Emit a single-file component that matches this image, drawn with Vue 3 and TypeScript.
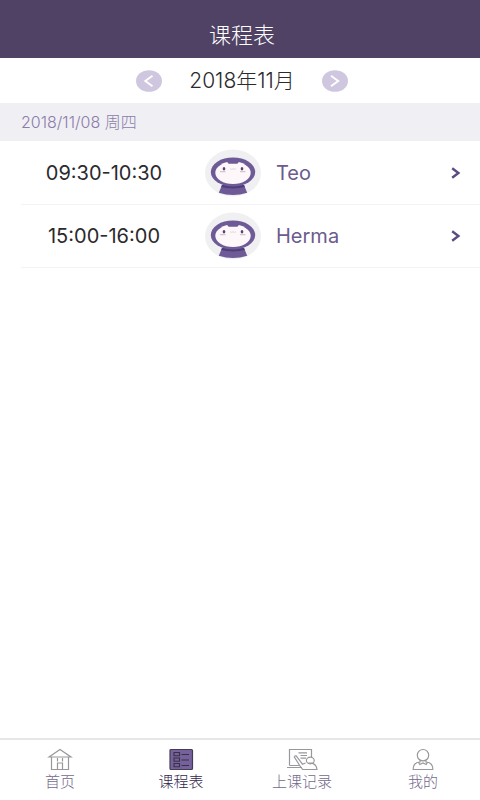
<script setup lang="ts">
import { computed, ref } from 'vue'

interface Lesson {
  time: string
  teacher: string
}

const year = ref(2018)
const month = ref(11)
const monthLabel = computed(() => `${year.value}年${month.value}月`)

function shiftMonth(step: number): void {
  const next = new Date(year.value, month.value - 1 + step, 1)
  year.value = next.getFullYear()
  month.value = next.getMonth() + 1
}

const lessons: Lesson[] = [
  { time: '09:30-10:30', teacher: 'Teo' },
  { time: '15:00-16:00', teacher: 'Herma' },
]
</script>

<template>
  <div class="screen">
    <header class="header">
      <h1 class="title">课程表</h1>
    </header>

    <div class="month">
      <button type="button" class="month-button" aria-label="上个月" @click="shiftMonth(-1)">
        <svg width="26" height="22" viewBox="0 0 26 22" aria-hidden="true">
          <ellipse cx="13" cy="11" rx="13" ry="10.8" fill="#cfc7df" />
          <path d="M16.500 5.800 9.300 11l7.200 5.200" fill="none" stroke="#fff" stroke-width="1.900" />
        </svg>
      </button>
      <span class="month-label">{{ monthLabel }}</span>
      <button type="button" class="month-button" aria-label="下个月" @click="shiftMonth(1)">
        <svg width="26" height="22" viewBox="0 0 26 22" aria-hidden="true">
          <ellipse cx="13" cy="11" rx="13" ry="10.8" fill="#cfc7df" />
          <path d="m9 5.800 7.200 5.200L9 16.200" fill="none" stroke="#fff" stroke-width="1.900" />
        </svg>
      </button>
    </div>

    <main class="schedule">
      <h2 class="date">2018/11/08 周四</h2>
      <ul class="lessons">
        <li v-for="lesson in lessons" :key="lesson.time" class="lesson">
          <a href="#" class="lesson-link">
            <span class="time">{{ lesson.time }}</span>
            <svg class="avatar" width="56" height="48" viewBox="0 0 56 48" aria-hidden="true">
              <ellipse cx="28" cy="24" rx="28" ry="23.5" fill="#f0eff2" />
              <path d="M17 36h22l3.200 7.700q-14.200 4.600-28.400 0z" fill="#6d5a96" />
              <path d="M17 36h22l.8 2q-11.800 2.800-23.600 0z" fill="#4f3d78" />
              <ellipse cx="28" cy="23" rx="22.200" ry="14.500" fill="#6d5a96" />
              <ellipse cx="28" cy="23.800" rx="17.700" ry="11.200" fill="#fdf7fa" />
              <path d="M22 10.500h12v2.300l-1.600 2H23.600l-1.600-2z" fill="#6d5a96" />
              <ellipse cx="19" cy="19.800" rx="1.300" ry="1.800" fill="#55456c" />
              <ellipse cx="37" cy="19.800" rx="1.300" ry="1.800" fill="#55456c" />
              <path d="M15 22.700h5.500M35 22.700h5.500" stroke="#d8c3ce" stroke-width="1.200" />
              <path d="M25 19.800q1.500 1 3 0 1.500 1 3 0" fill="none" stroke="#d1c8d5" stroke-width=".7" />
            </svg>
            <span class="teacher">{{ lesson.teacher }}</span>
            <svg class="chevron" width="10" height="12" viewBox="0 0 10 12" aria-hidden="true">
              <path d="M1.200 1.300 7.400 6l-6.200 4.700" fill="none" stroke="#5b4b80" stroke-width="2.400" />
            </svg>
          </a>
        </li>
      </ul>
    </main>

    <nav class="tabs">
      <a href="#" class="tab">
        <svg width="32" height="24" viewBox="0 0 32 24" fill="none" stroke="#99979b" stroke-width="1.200" aria-hidden="true">
          <path d="M5 9 16 1.500 27 9zM7.500 9v12.500h17V9M13.500 21.500V15h5v6.500M13.500 10v3.500M18.500 10v3.500" />
        </svg>
        <span>首页</span>
      </a>
      <a href="#" class="tab tab-active" aria-current="page">
        <svg width="32" height="24" viewBox="0 0 32 24" fill="none" aria-hidden="true">
          <rect x="5" y="1.500" width="22.500" height="20" rx="1" fill="#75619b" stroke="#443c55" stroke-width="1.200" />
          <path d="M9 4.500h5.500v3.200H9zM9 10h5.500v3.200H9zM9 15.500h5.500v3.200H9zM16.500 6.500h7.500M16.500 12h7.500M16.500 17.500h7.500" stroke="#393044" stroke-width="1.100" />
        </svg>
        <span>课程表</span>
      </a>
      <a href="#" class="tab">
        <svg width="32" height="24" viewBox="0 0 32 24" fill="none" stroke="#99979b" stroke-width="1.200" aria-hidden="true">
          <path d="M3.500 17.500V1.500h22v7.800M3.500 17.500h10M1 19.500h15M12.500 4.800h8.500M14.500 7.500h6.500M14.500 10.200h5.500" />
          <path d="m8 8.500 2-.8 6.500 8.500 3-1.200M8 8.500l6.500 10.200 2.200 2.800h14.300q-.6-5.300-5.400-6.300l-3.200-.2" />
          <ellipse cx="24.300" cy="12.500" rx="3.900" ry="3.300" />
        </svg>
        <span>上课记录</span>
      </a>
      <a href="#" class="tab">
        <svg width="32" height="24" viewBox="0 0 32 24" fill="none" stroke="#99979b" stroke-width="1.200" aria-hidden="true">
          <ellipse cx="16" cy="7.200" rx="5.700" ry="5.700" />
          <path d="M13 12.300v1.700q-6.800.4-6.800 7.500h19.600q0-7.100-6.800-7.500v-1.700M11.500 14.300l1.300 2.200 3.200-1.500 3.200 1.500 1.300-2.200" />
        </svg>
        <span>我的</span>
      </a>
    </nav>
  </div>
</template>

<style>
body {
  margin: 0;
  background: #fff;
}
</style>

<style scoped>
.screen {
  display: flex;
  flex-direction: column;
  min-height: 100vh;
  background: #fff;
  color: #2b2a2d;
  font-family: Inter, "Noto Sans CJK SC", sans-serif;
}

.header {
  display: flex;
  justify-content: center;
  padding: 20px 0 8px;
  background: #4f4265;
}

.title {
  margin: 0;
  padding-left: 4px;
  color: #fff;
  font-size: 22px;
  font-weight: 300;
  line-height: 30px;
}

.month {
  display: flex;
  align-items: center;
  justify-content: center;
  gap: 26px;
  height: 45px;
  padding-left: 4px;
}

.month-button {
  display: block;
  padding: 0;
  border: 0;
  background: none;
  cursor: pointer;
}

.month-button svg,
.avatar,
.chevron {
  display: block;
}

.month-label {
  min-width: 108px;
  font-size: 21px;
  font-weight: 300;
  line-height: 24px;
  text-align: center;
  white-space: nowrap;
}

.schedule {
  flex: 1;
}

.date {
  margin: 0;
  padding: 0 21px;
  background: #f0eff4;
  color: #8a7da8;
  font-size: 16px;
  font-weight: 300;
  line-height: 38px;
}

.lessons {
  margin: 0;
  padding: 1px 0 0 21px;
  list-style: none;
}

.lesson {
  border-bottom: 1px solid #f3f2f5;
}

.lesson-link {
  display: grid;
  grid-template-columns: 166px 74px 1fr 10px;
  align-items: center;
  height: 62px;
  padding-right: 19px;
  color: inherit;
  text-decoration: none;
}

.time {
  font-size: 20px;
  text-align: center;
}

.avatar {
  justify-self: end;
}

.teacher {
  padding-left: 15px;
  color: #6c5b8c;
  font-size: 20px;
}

.tabs {
  display: flex;
  justify-content: space-between;
  padding: 8px 26px 8px 29px;
  border-top: 2px solid #e6e5e8;
}

.tab {
  display: flex;
  flex-direction: column;
  align-items: center;
  width: 62px;
  color: #74698c;
  font-size: 15px;
  font-weight: 300;
  line-height: 20px;
  text-decoration: none;
  white-space: nowrap;
}

.tab-active {
  color: #33264c;
}
</style>
